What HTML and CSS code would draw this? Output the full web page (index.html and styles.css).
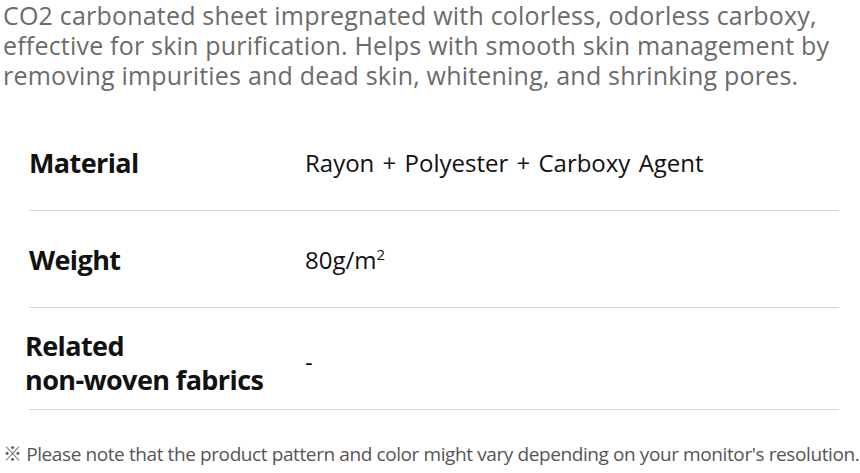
FILE: index.html
```html
<!DOCTYPE html>
<html lang="en">
<head>
<meta charset="utf-8">
<link rel="stylesheet" href="styles.css">
</head>
<body>
<div class="page">
  <p class="intro">CO2 carbonated sheet impregnated with colorless, odorless carboxy, effective for skin purification. Helps with smooth skin management by removing impurities and dead skin, whitening, and shrinking pores.</p>
  <div class="spec">
    <div class="row">
      <div class="label">Material</div>
      <div class="value">Rayon + Polyester + Carboxy Agent</div>
    </div>
    <div class="row">
      <div class="label">Weight</div>
      <div class="value">80g/m<sup class="sq">2</sup></div>
    </div>
    <div class="row row-tall">
      <div class="label label-wrap">Related<br>non-woven fabrics</div>
      <div class="value value-dash">-</div>
    </div>
  </div>
  <p class="note">※ Please note that the product pattern and color might vary depending on your monitor's resolution.</p>
</div>
</body>
</html>
```
FILE: styles.css
```css
html, body {
  margin: 0;
  padding: 0;
  background: #ffffff;
}
.page {
  width: 860px;
  font-family: "Open Sans", "Noto Sans CJK KR", sans-serif;
}
.intro {
  margin: 0;
  padding: 0 0 0 3px;
  font-size: 25px;
  line-height: 30px;
  color: #6b6b6b;
  letter-spacing: 0.2px;
}
.spec {
  margin: 24px 21px 0 29px;
  display: flex;
  flex-direction: column;
}
.row {
  display: grid;
  grid-template-columns: 276px 1fr;
  align-items: center;
  height: 96px;
  border-bottom: 1px solid #d6d6d6;
}
.row-tall {
  height: 101px;
}
.label {
  font-size: 27px;
  font-weight: 700;
  color: #111;
  letter-spacing: -0.6px;
}
.label-wrap {
  margin-left: -4px;
  line-height: 34px;
  padding-top: 8px;
}
.value {
  font-size: 24px;
  color: #111;
  word-spacing: 2px;
}
.value-dash {
  padding-top: 6px;
}
.sq {
  font-size: 15px;
  vertical-align: 9px;
  line-height: 0;
}
.note {
  margin: 32px 0 0 3px;
  font-size: 19px;
  line-height: 24px;
  color: #555;
  letter-spacing: -0.4px;
  white-space: nowrap;
}
```
